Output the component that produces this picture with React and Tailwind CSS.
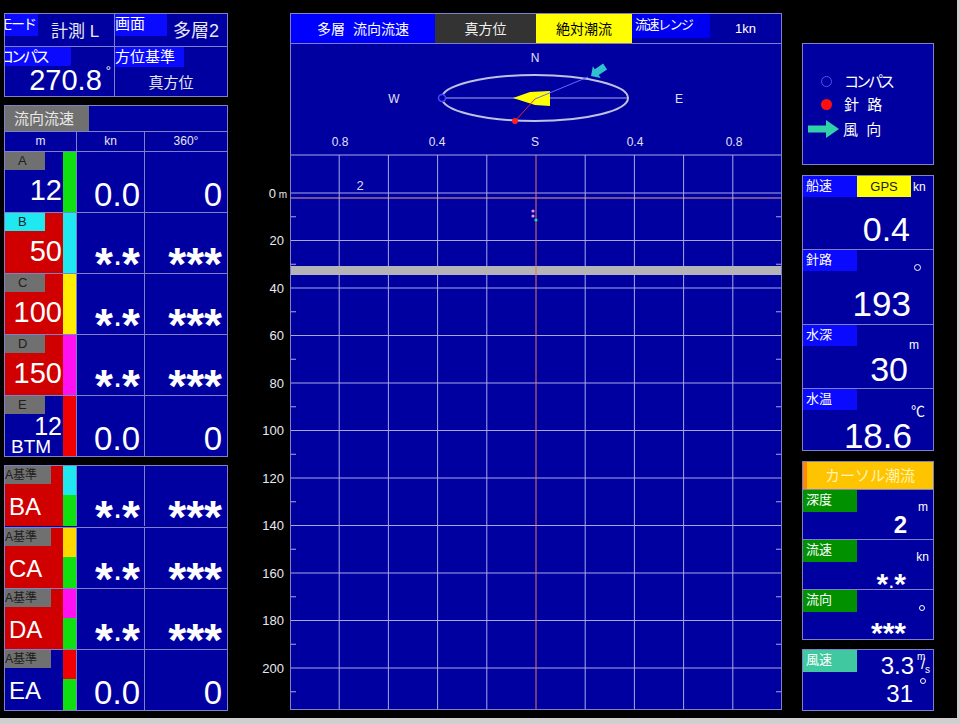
import React from 'react';

const FONT = "font-['Liberation_Sans','Noto_Sans_CJK_JP',sans-serif]";

// asterisks in this display are drawn big and low, like the digits
const Val = ({ text, star = 'text-[46px] top-[15px]' }) => (
    <span className="whitespace-nowrap">
        {text.split('').map((ch, i) =>
            ch === '*'
                ? <span key={i} className={`relative font-bold leading-none ${star}`}>*</span>
                : <span key={i}>{ch}</span>
        )}
    </span>
);

const topRows = [
    {tag: 'A', tagBg: 'bg-[#707070]', cellBg: 'bg-[#0000a0]', depth: '12', bar: 'bg-[#10e010]', kn: '0.0', deg: '0'},
    {tag: 'B', tagBg: 'bg-[#20e8f0]', cellBg: 'bg-[#d00000]', depth: '50', bar: 'bg-[#20e8f0]', kn: '*.*', deg: '***'},
    {tag: 'C', tagBg: 'bg-[#707070]', cellBg: 'bg-[#d00000]', depth: '100', bar: 'bg-[#ffee00]', kn: '*.*', deg: '***'},
    {tag: 'D', tagBg: 'bg-[#707070]', cellBg: 'bg-[#d00000]', depth: '150', bar: 'bg-[#ff10f0]', kn: '*.*', deg: '***'},
    {tag: 'E', tagBg: 'bg-[#707070]', cellBg: 'bg-[#0000a0]', depth: '12', bar: 'bg-[#f00000]', kn: '0.0', deg: '0', btm: true},
]

const refRows = [
    {label: 'BA', cellBg: 'bg-[#d00000]', bar: 'bg-[#20e8f0]', kn: '*.*', deg: '***'},
    {label: 'CA', cellBg: 'bg-[#d00000]', bar: 'bg-[#ffd800]', kn: '*.*', deg: '***'},
    {label: 'DA', cellBg: 'bg-[#d00000]', bar: 'bg-[#ff10f0]', kn: '*.*', deg: '***'},
    {label: 'EA', cellBg: 'bg-[#0000a0]', bar: 'bg-[#f00000]', kn: '0.0', deg: '0'},
]

const NumCells = ({kn, deg}) => (
    <>
        <div className="border-l border-[#8080c8] flex items-end justify-end pr-[4px] pb-[1px] text-[33px] leading-none text-white">
            <Val text={kn}/>
        </div>
        <div className="border-l border-[#8080c8] flex items-end justify-end pr-[5px] pb-[1px] text-[33px] leading-none text-white">
            <Val text={deg}/>
        </div>
    </>
)

const LeftColumn = () => (
    <div className="w-[224px] flex flex-col">
        {/* mode / compass block */}
        <div className="w-[224px] h-[84px] border border-[#8080c8] bg-[#0000a0] grid grid-cols-[109px_113px] grid-rows-[32px_50px] text-white">
            <div className="flex items-start">
                <div className="w-[33px] h-[22px] bg-[#0a0aff] overflow-hidden text-[14px] leading-[20px] whitespace-nowrap tracking-[-2px]">
                    <span className="inline-block -ml-[6px]">モード</span>
                </div>
                <div className="ml-[13px] mt-[9px] text-[17px] leading-none text-[#e8e8f0]">計測 L</div>
            </div>
            <div className="border-l border-[#8080c8] flex items-start">
                <div className="w-[52px] h-[22px] bg-[#0a0aff] text-[15px] leading-[20px]">画面</div>
                <div className="ml-[6px] mt-[8px] text-[18px] leading-none text-[#e8e8f0]">多層2</div>
            </div>
            <div className="border-t border-[#8080c8] flex flex-col">
                <div className="w-[66px] h-[20px] bg-[#0a0aff] overflow-hidden text-[15px] leading-[19px] whitespace-nowrap tracking-[-3px]">
                    <span className="inline-block -ml-[6px]">コンパス</span>
                </div>
                <div className="flex-1 flex items-end justify-end pr-[3px] pb-[1px] text-[29px] leading-none">
                    270.8<span className="relative -top-[18px] ml-[4px] text-[13px]">°</span>
                </div>
            </div>
            <div className="border-t border-l border-[#8080c8] flex flex-col">
                <div className="w-[69px] h-[20px] bg-[#0a0aff] text-[15px] leading-[19px] whitespace-nowrap">方位基準</div>
                <div className="flex-1 flex items-center justify-center text-[15px] text-[#e8e8f0] pt-[3px]">真方位</div>
            </div>
        </div>

        {/* layer table */}
        <div className="mt-[8px] w-[224px] border border-[#8080c8] bg-[#0000a0] text-white">
            <div className="h-[25px] flex">
                <div className="w-[84px] bg-[#707070] text-[15px] text-[#e8e8e8] leading-[25px] pl-[9px]">流向流速</div>
            </div>
            <div className="grid grid-cols-[71px_68px_83px] h-[20px] border-t border-[#8080c8] text-[12px] text-[#e8e8f0] leading-[19px] text-center">
                <div>m</div>
                <div className="border-l border-[#8080c8]">kn</div>
                <div className="border-l border-[#8080c8]">360°</div>
            </div>
            {topRows.map((r, i) => (
                <div key={i} className="grid grid-cols-[58px_13px_68px_83px] grid-rows-[60px] h-[61px] border-t border-[#8080c8]">
                    <div className={`flex flex-col ${r.cellBg}`}>
                        <div className={`w-[40px] h-[18px] shrink-0 ${r.tagBg} text-[13px] text-[#202020] leading-[18px] pl-[13px]`}>{r.tag}</div>
                        {r.btm ? (
                            <div className="flex flex-col">
                                <div className="text-right pr-[1px] text-[25px] leading-[22px] mt-[1px]">12</div>
                                <div className="text-[19px] leading-[19px] pl-[6px]">BTM</div>
                            </div>
                        ) : (
                            <div className="flex-1 flex items-end justify-end pr-[1px] pb-[7px] text-[29px] leading-none">{r.depth}</div>
                        )}
                    </div>
                    <div className={r.bar}></div>
                    <NumCells kn={r.kn} deg={r.deg}/>
                </div>
            ))}
        </div>

        {/* A reference table */}
        <div className="mt-[8px] w-[224px] border border-[#8080c8] bg-[#0000a0] text-white">
            {refRows.map((r, i) => (
                <div key={i} className={`grid grid-cols-[58px_13px_68px_83px] grid-rows-[60px] h-[61px] ${i ? 'border-t border-[#8080c8]' : ''}`}>
                    <div className={`flex flex-col ${r.cellBg}`}>
                        <div className="w-[46px] h-[18px] bg-[#707070] text-[12px] text-[#202020] leading-[18px] whitespace-nowrap">A基準</div>
                        <div className="flex-1 flex items-center pl-[4px] text-[24px] leading-none pt-[4px]">{r.label}</div>
                    </div>
                    <div className="flex flex-col">
                        <div className={`h-[29px] ${r.bar}`}></div>
                        <div className="flex-1 bg-[#10e010]"></div>
                    </div>
                    <NumCells kn={r.kn} deg={r.deg}/>
                </div>
            ))}
        </div>
    </div>
)

const depthLabels = [20, 40, 60, 80, 100, 120, 140, 160, 180, 200]

const DepthAxis = () => (
    <svg className="ml-[22px] shrink-0" width="40" height="697" viewBox="250 13 40 697">
        <text x="276" y="198" fontSize="13" fill="#e8e8f0" textAnchor="end" fontFamily="Liberation Sans">0</text>
        <text x="287" y="198" fontSize="10" fill="#e8e8f0" textAnchor="end" fontFamily="Liberation Sans">m</text>
        {depthLabels.map((d, i) => (
            <text key={d} x="284" y={245 + i * 47.5} fontSize="13" fill="#e8e8f0" textAnchor="end"
                  fontFamily="Liberation Sans">{d}</text>
        ))}
    </svg>
)

const CurrentChart = () => {
    const cols = Array.from({length: 9}, (_, i) => 290 + 49.2 * (i + 1))
    const rows = Array.from({length: 11}, (_, i) => 193 + 47.5 * i)
    const ticks = Array.from({length: 11}, (_, i) => 216.75 + 47.5 * i)
    const lbl = {fontSize: 12, fill: '#e0e0f8', fontFamily: 'Liberation Sans', textAnchor: 'middle'}
    return (
        <svg width="490" height="665" viewBox="291 44 490 665" className="block">
            {/* compass */}
            <text x="535" y="62" {...lbl}>N</text>
            <text x="394" y="103" {...lbl}>W</text>
            <text x="679" y="103" {...lbl}>E</text>
            <text x="535" y="146" {...lbl}>S</text>
            <line x1="442" y1="98" x2="627" y2="98" stroke="#a8a8e8" strokeWidth="1"/>
            <ellipse cx="535" cy="98" rx="93" ry="23" fill="none" stroke="#c0c0e0" strokeWidth="2"/>
            <polygon points="513,98 530,92 550,91 550,106 535,105" fill="#ffff00"/>
            <line x1="535" y1="99" x2="588" y2="77" stroke="#6868ff" strokeWidth="1"/>
            <line x1="535" y1="99" x2="515" y2="121" stroke="#e03030" strokeWidth="1"/>
            <circle cx="515" cy="121" r="3" fill="#ff2020"/>
            <circle cx="442" cy="98" r="3.5" fill="#0000a0" stroke="#4848ff" strokeWidth="1.5"/>
            <polygon points="0,0 -7,-7 -7,-3.5 -17,-3.5 -17,3.5 -7,3.5 -7,7" fill="#30c0d0"
                     transform="translate(591,76) rotate(146)"/>
            <text x="340" y="146" {...lbl}>0.8</text>
            <text x="437" y="146" {...lbl}>0.4</text>
            <text x="635" y="146" {...lbl}>0.4</text>
            <text x="734" y="146" {...lbl}>0.8</text>

            {/* grid */}
            <line x1="291" y1="155" x2="781" y2="155" stroke="#a8a8e8" strokeWidth="1.2"/>
            {cols.map((x, i) => i !== 4 && (
                <line key={x} x1={x} y1="155" x2={x} y2="710" stroke="#a8a8e8" strokeWidth="1"/>
            ))}
            {rows.map(y => (
                <line key={y} x1="291" y1={y} x2="781" y2={y} stroke="#a8a8e8" strokeWidth="1"/>
            ))}
            <line x1="291" y1="198" x2="781" y2="198" stroke="#e8a090" strokeWidth="1"/>
            {ticks.map(y => (
                <g key={y}>
                    <line x1="291" y1={y} x2="296" y2={y} stroke="#a8a8e8" strokeWidth="1"/>
                    <line x1="776" y1={y} x2="781" y2={y} stroke="#a8a8e8" strokeWidth="1"/>
                </g>
            ))}
            <rect x="291" y="266" width="490" height="9" fill="#b4b4b8"/>
            <line x1={cols[4]} y1="155" x2={cols[4]} y2="710" stroke="#e07860" strokeWidth="1"/>
            <text x="360" y="190" fontSize="13" fill="#d8d8f8" fontFamily="Liberation Sans" textAnchor="middle">2</text>
            <circle cx="533" cy="211" r="1.6" fill="#e890f0"/>
            <circle cx="533" cy="216" r="1.6" fill="#e890f0"/>
            <circle cx="536" cy="220" r="1.6" fill="#30d890"/>
        </svg>
    )
}

const CenterPanel = () => (
    <div className="w-[492px] h-[697px] border border-[#8080c8] bg-[#0000a0] shrink-0">
        <div className="flex h-[30px] border-b border-[#8080c8] text-[14px] leading-none">
            <div className="w-[144px] bg-[#0000ff] text-white flex items-center justify-center">多層&nbsp;&nbsp;流向流速</div>
            <div className="w-[101px] bg-[#333333] text-[#f0f0f0] flex items-center justify-center">真方位</div>
            <div className="w-[96px] bg-[#ffff00] text-black flex items-center justify-center">絶対潮流</div>
            <div className="w-[78px]">
                <div className="h-[24px] bg-[#0000f0] text-white text-[13px] tracking-[-1.5px] pl-[3px] pt-[4px] whitespace-nowrap">流速レンジ</div>
            </div>
            <div className="w-[71px] text-white text-[13px] flex items-center justify-center">1kn</div>
        </div>
        <CurrentChart/>
    </div>
)

const Tab = ({children, bg = 'bg-[#0a0aff]', h = 'h-[21px]'}) => (
    <div className={`w-[54px] ${h} ${bg} text-white text-[13px] leading-[19px] pl-[3px] whitespace-nowrap`}>{children}</div>
)

const RightColumn = () => (
    <div className="ml-[20px] w-[132px] flex flex-col text-white">
        {/* legend */}
        <div className="mt-[30px] h-[122px] border border-[#8080c8] bg-[#0000a0] flex flex-col gap-[8px] pl-[5px] pt-[30px] text-[15px] leading-none">
            <div className="flex items-center">
                <span className="w-[11px] h-[11px] rounded-full border border-[#5050ff] ml-[13px]"></span>
                <span className="ml-[12px] tracking-[-3px]">コンパス</span>
            </div>
            <div className="flex items-center">
                <span className="w-[11px] h-[11px] rounded-full bg-[#ff1010] ml-[13px]"></span>
                <span className="ml-[12px]">針&nbsp;&nbsp;路</span>
            </div>
            <div className="flex items-center">
                <svg width="32" height="18" viewBox="0 0 32 18">
                    <polygon points="0,5.5 18,5.5 18,0 31,9 18,18 18,12.5 0,12.5" fill="#30d0a8"/>
                </svg>
                <span className="ml-[3px]">風&nbsp;&nbsp;向</span>
            </div>
        </div>

        {/* own ship */}
        <div className="mt-[10px] border border-[#8080c8] bg-[#0000a0]">
            <div className="h-[73px] flex flex-col">
                <div className="flex items-start">
                    <Tab>船速</Tab>
                    <div className="w-[54px] h-[21px] bg-[#ffff00] text-[#202020] text-[13px] leading-[21px] text-center">GPS</div>
                    <div className="text-[12px] ml-[2px] mt-[5px] leading-none">kn</div>
                </div>
                <div className="flex-1 flex items-end justify-end pr-[23px] pb-[3px] text-[34px] leading-none">0.4</div>
            </div>
            <div className="h-[75px] border-t border-[#8080c8] flex flex-col">
                <div className="flex items-start justify-between">
                    <Tab>針路</Tab>
                    <span className="mt-[14px] mr-[12px] w-[7px] h-[7px] rounded-full border border-white"></span>
                </div>
                <div className="flex-1 flex items-end justify-end pr-[22px] pb-[3px] text-[35px] leading-none">193</div>
            </div>
            <div className="h-[64px] border-t border-[#8080c8] flex flex-col">
                <div className="flex items-start justify-between">
                    <Tab>水深</Tab>
                    <span className="mt-[14px] mr-[14px] text-[12px] leading-none">m</span>
                </div>
                <div className="flex-1 flex items-end justify-end pr-[25px] pb-[2px] text-[34px] leading-none">30</div>
            </div>
            <div className="h-[62px] border-t border-[#8080c8] flex flex-col">
                <div className="flex items-start justify-between">
                    <Tab>水温</Tab>
                    <span className="mt-[15px] mr-[8px] text-[14px] leading-none">℃</span>
                </div>
                <div className="flex-1 flex items-end justify-end pr-[21px] pb-[2px] text-[35px] leading-none">18.6</div>
            </div>
        </div>

        {/* cursor current */}
        <div className="mt-[10px] border border-[#8080c8] bg-[#0000a0]">
            <div className="h-[27px] bg-[#ffc400] border-l-[4px] border-[#ff8a00] text-[15px] text-[#fff4b8] leading-[27px] text-center">カーソル潮流</div>
            <div className="h-[50px] border-t border-[#8080c8] flex flex-col">
                <div className="flex items-start justify-between">
                    <Tab bg="bg-[#009000]" h="h-[22px]">深度</Tab>
                    <span className="mt-[11px] mr-[5px] text-[12px] leading-none">m</span>
                </div>
                <div className="flex-1 flex items-end justify-end pr-[26px] pb-[7px] text-[24px] font-bold leading-none">2</div>
            </div>
            <div className="h-[50px] border-t border-[#8080c8] flex flex-col">
                <div className="flex items-start justify-between">
                    <Tab bg="bg-[#009000]" h="h-[22px]">流速</Tab>
                    <span className="mt-[11px] mr-[4px] text-[12px] leading-none">kn</span>
                </div>
                <div className="flex-1 flex items-end justify-end pr-[27px] pb-[6px] text-[22px] leading-none">
                    <Val text="*.*" star="text-[30px] top-[6px]"/>
                </div>
            </div>
            <div className="h-[50px] border-t border-[#8080c8] flex flex-col">
                <div className="flex items-start justify-between">
                    <Tab bg="bg-[#009000]" h="h-[22px]">流向</Tab>
                    <span className="mt-[15px] mr-[8px] w-[6px] h-[6px] rounded-full border border-white"></span>
                </div>
                <div className="flex-1 flex items-end justify-end pr-[27px] pb-[6px] text-[22px] leading-none">
                    <Val text="***" star="text-[30px] top-[6px]"/>
                </div>
            </div>
        </div>

        {/* wind */}
        <div className="mt-[9px] h-[62px] border border-[#8080c8] bg-[#0000a0] flex">
            <div className="flex flex-col">
                <Tab bg="bg-[#40c8a0]" h="h-[22px]">風速</Tab>
            </div>
            <div className="flex-1 flex flex-col items-end pr-[4px] text-[24px] leading-none">
                <div className="flex items-start mt-[2px]">
                    <span className="mt-[2px]">3.3</span>
                    <span className="relative ml-[3px] w-[12px] h-[24px] text-[10px]">
                        <span className="absolute left-0 top-0">m</span>
                        <span className="absolute left-[4px] top-[4px] text-[15px]">/</span>
                        <span className="absolute left-[8px] top-[13px]">s</span>
                    </span>
                </div>
                <div className="flex items-start">
                    <span className="mt-[4px]">31</span>
                    <span className="ml-[7px] mr-[3px] w-[6px] h-[6px] rounded-full border border-white"></span>
                </div>
            </div>
        </div>
    </div>
)

export default function App() {
    return (
        <div className={`w-[960px] h-[724px] bg-[#cfcfcf] ${FONT}`}>
            <div className="w-[957px] h-[718px] bg-black flex items-start pt-[13px] pl-[4px]">
                <LeftColumn/>
                <DepthAxis/>
                <CenterPanel/>
                <RightColumn/>
            </div>
        </div>
    )
}
